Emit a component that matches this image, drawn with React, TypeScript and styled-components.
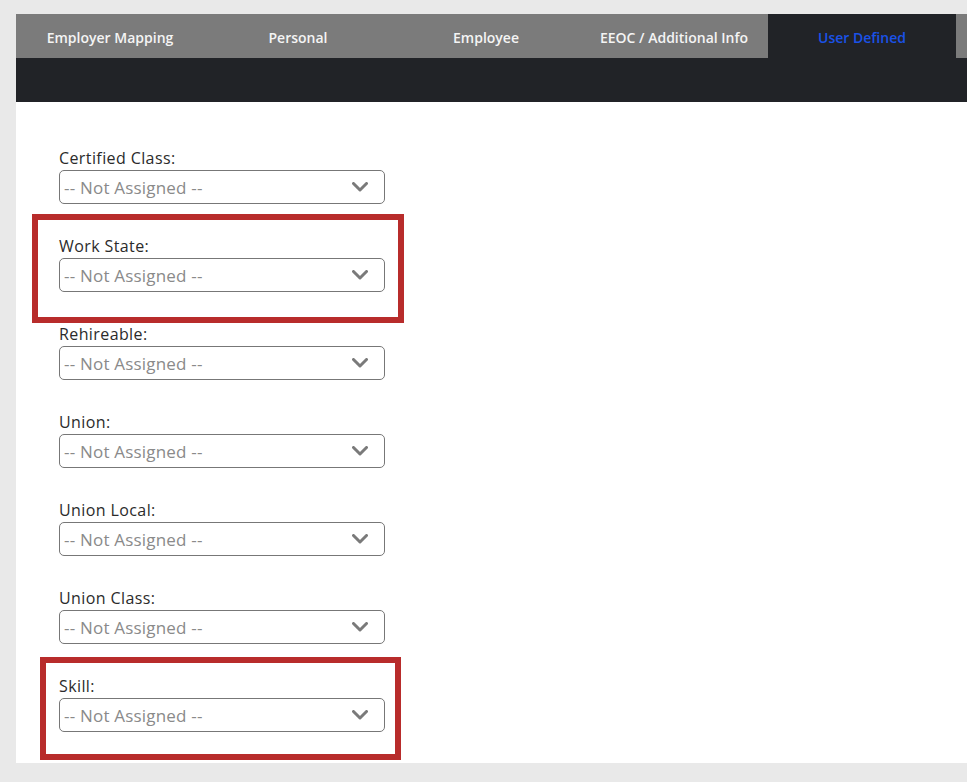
import styled, { createGlobalStyle } from 'styled-components'

const fields = [
  'Certified Class:',
  'Work State:',
  'Rehireable:',
  'Union:',
  'Union Local:',
  'Union Class:',
  'Skill:',
]

const tabs = [
  'Employer Mapping',
  'Personal',
  'Employee',
  'EEOC / Additional Info',
  'User Defined',
  '',
]

const ACTIVE_TAB = 'User Defined'

function Chevron() {
  return (
    <svg width="16" height="10" viewBox="0 0 16 10">
      <path
        d="M1.5 1.5 L8 8 L14.5 1.5"
        fill="none"
        stroke="#7a7a7a"
        strokeWidth="3"
        strokeLinecap="round"
        strokeLinejoin="round"
      />
    </svg>
  )
}

export default function App() {
  return (
    <>
      <GlobalStyle />
      <Page>
        <Panel>
          <TabBar>
            {tabs.map((tab, i) => (
              <Tab key={i} $active={tab === ACTIVE_TAB}>
                {tab}
              </Tab>
            ))}
          </TabBar>
          <SubBar />
          <Form>
            {fields.map((label) => (
              <Field key={label}>
                <Label>{label}</Label>
                <Select>
                  <Placeholder>-- Not Assigned --</Placeholder>
                  <Chevron />
                </Select>
              </Field>
            ))}
            <Highlight $top={112} $left={16} $width={372} $height={109} />
            <Highlight $top={555} $left={24} $width={361} $height={103} />
          </Form>
        </Panel>
      </Page>
    </>
  )
}

const GlobalStyle = createGlobalStyle`
  html, body {
    margin: 0;
    padding: 0;
    background: #e9e9e9;
    font-family: 'Open Sans', 'Liberation Sans', sans-serif;
  }
`

const Page = styled.div`
  padding: 14px 0 19px 16px;
  height: 782px;
  box-sizing: border-box;
  overflow: hidden;
`

const Panel = styled.div`
  background: #fff;
  height: 749px;
  display: flex;
  flex-direction: column;
`

const TabBar = styled.div`
  display: grid;
  grid-template-columns: repeat(6, 188px);
  height: 44px;
  background: #7b7b7b;
  overflow: hidden;
`

const Tab = styled.div<{ $active?: boolean }>`
  display: flex;
  align-items: center;
  justify-content: center;
  padding-top: 2px;
  font-size: 14px;
  font-weight: 600;
  color: ${(p) => (p.$active ? '#1a52e8' : '#f4f4f4')};
  background: ${(p) => (p.$active ? '#212327' : 'transparent')};
  white-space: nowrap;
`

const SubBar = styled.div`
  height: 44px;
  background: #212327;
`

const Form = styled.div`
  position: relative;
  display: flex;
  flex-direction: column;
  gap: 33px;
  padding: 47px 0 0 43px;
`

const Field = styled.div`
  display: flex;
  flex-direction: column;
  gap: 3px;
`

const Label = styled.div`
  font-size: 16px;
  line-height: 18px;
  color: #2b2b2b;
  letter-spacing: 0.4px;
`

const Select = styled.div`
  width: 326px;
  height: 34px;
  box-sizing: border-box;
  border: 1px solid #777;
  border-radius: 5px;
  display: flex;
  align-items: center;
  justify-content: space-between;
  padding: 0 16px 0 4px;
`

const Placeholder = styled.span`
  font-size: 17px;
  letter-spacing: 0.2px;
  color: #8a8a8a;
`

const Highlight = styled.div<{
  $top: number
  $left: number
  $width: number
  $height: number
}>`
  position: absolute;
  top: ${(p) => p.$top}px;
  left: ${(p) => p.$left}px;
  width: ${(p) => p.$width}px;
  height: ${(p) => p.$height}px;
  box-sizing: border-box;
  border: 6.5px solid #b82c2b;
  pointer-events: none;
`
